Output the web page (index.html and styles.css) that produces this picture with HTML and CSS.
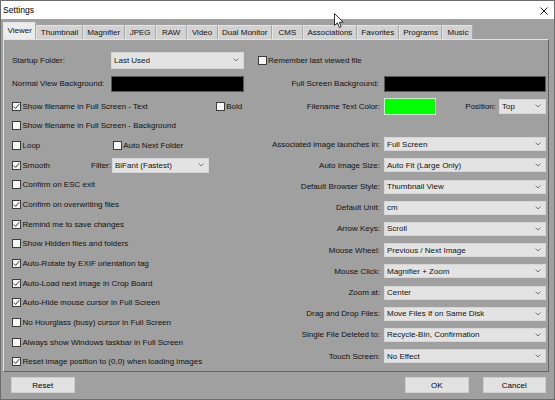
FILE: index.html
```html
<!DOCTYPE html>
<html lang="en">
<head>
    <meta charset="UTF-8">
    <title>Settings</title>
    <link rel="stylesheet" href="styles.css">
</head>
<body>
  <div class="window">
    <div class="titlebar">
        <span>Settings</span>
        <svg class="close" width="8" height="8" viewBox="0 0 8 8"><path d="M0.5 0.5 L7.5 7.5 M7.5 0.5 L0.5 7.5" stroke="#222" stroke-width="1" fill="none"/></svg>
    </div>
    <div class="tabs">
        <div class="tab active">Viewer</div>
        <div class="tab">Thumbnail</div>
        <div class="tab">Magnifier</div>
        <div class="tab">JPEG</div>
        <div class="tab">RAW</div>
        <div class="tab">Video</div>
        <div class="tab">Dual Monitor</div>
        <div class="tab">CMS</div>
        <div class="tab">Associations</div>
        <div class="tab">Favorites</div>
        <div class="tab">Programs</div>
        <div class="tab">Music</div>
    </div>

    <div class="panel">
        <!-- top rows span both halves -->
        <div class="top_row first">
            <span class="top_label">Startup Folder:</span>
            <div class="select tall w_start"><span>Last Used</span><svg width="6" height="4" viewBox="0 0 6 4"><path d="M0.5 0.5 L3 3 L5.5 0.5" stroke="#777" fill="none"/></svg></div>
            <div class="check remember"><span class="box"></span>Remember last viewed file</div>
        </div>
        <div class="top_row second">
            <span class="top_label">Normal View Background:</span>
            <div class="swatch black w_start"></div>
            <span class="right_label">Full Screen Background:</span>
            <div class="swatch black w_right"></div>
        </div>

        <div class="body">
            <div class="left_col">
                <div class="row">
                    <div class="check w_text"><span class="box on"><svg width="7" height="7" viewBox="0 0 7 7"><path d="M0.8 3.6 L2.6 5.4 L6.2 1.2" stroke="#333" fill="none"/></svg></span>Show filename in Full Screen - Text</div>
                    <div class="check"><span class="box"></span>Bold</div>
                </div>
                <div class="row"><div class="check"><span class="box"></span>Show filename in Full Screen - Background</div></div>
                <div class="row">
                    <div class="check w_loop"><span class="box"></span>Loop</div>
                    <div class="check"><span class="box"></span>Auto Next Folder</div>
                </div>
                <div class="row">
                    <div class="check w_smooth"><span class="box on"><svg width="7" height="7" viewBox="0 0 7 7"><path d="M0.8 3.6 L2.6 5.4 L6.2 1.2" stroke="#333" fill="none"/></svg></span>Smooth</div>
                    <span class="filter_label">Filter:</span>
                    <div class="select mid w_filter"><span>BiFant (Fastest)</span><svg width="6" height="4" viewBox="0 0 6 4"><path d="M0.5 0.5 L3 3 L5.5 0.5" stroke="#777" fill="none"/></svg></div>
                </div>
                <div class="row"><div class="check"><span class="box"></span>Confirm on ESC exit</div></div>
                <div class="row"><div class="check"><span class="box on"><svg width="7" height="7" viewBox="0 0 7 7"><path d="M0.8 3.6 L2.6 5.4 L6.2 1.2" stroke="#333" fill="none"/></svg></span>Confirm on overwriting files</div></div>
                <div class="row"><div class="check"><span class="box on"><svg width="7" height="7" viewBox="0 0 7 7"><path d="M0.8 3.6 L2.6 5.4 L6.2 1.2" stroke="#333" fill="none"/></svg></span>Remind me to save changes</div></div>
                <div class="row"><div class="check"><span class="box"></span>Show Hidden files and folders</div></div>
                <div class="row"><div class="check"><span class="box on"><svg width="7" height="7" viewBox="0 0 7 7"><path d="M0.8 3.6 L2.6 5.4 L6.2 1.2" stroke="#333" fill="none"/></svg></span>Auto-Rotate by EXIF orientation tag</div></div>
                <div class="row"><div class="check"><span class="box on"><svg width="7" height="7" viewBox="0 0 7 7"><path d="M0.8 3.6 L2.6 5.4 L6.2 1.2" stroke="#333" fill="none"/></svg></span>Auto-Load next image in Crop Board</div></div>
                <div class="row"><div class="check"><span class="box on"><svg width="7" height="7" viewBox="0 0 7 7"><path d="M0.8 3.6 L2.6 5.4 L6.2 1.2" stroke="#333" fill="none"/></svg></span>Auto-Hide mouse cursor in Full Screen</div></div>
                <div class="row"><div class="check"><span class="box"></span>No Hourglass (busy) cursor in Full Screen</div></div>
                <div class="row"><div class="check"><span class="box"></span>Always show Windows taskbar in Full Screen</div></div>
                <div class="row"><div class="check"><span class="box on"><svg width="7" height="7" viewBox="0 0 7 7"><path d="M0.8 3.6 L2.6 5.4 L6.2 1.2" stroke="#333" fill="none"/></svg></span>Reset image position to (0,0) when loading images</div></div>
            </div>

            <div class="right_col">
                <div class="color_row">
                    <span class="color_label">Filename Text Color:</span>
                    <div class="swatch green"></div>
                    <span class="pos_label">Position:</span>
                    <div class="select mid w_pos"><span>Top</span><svg width="6" height="4" viewBox="0 0 6 4"><path d="M0.5 0.5 L3 3 L5.5 0.5" stroke="#777" fill="none"/></svg></div>
                </div>
                <div class="opts">
                    <div class="opt"><span class="right_label">Associated image launches in:</span><div class="select w_right"><span>Full Screen</span><svg width="6" height="4" viewBox="0 0 6 4"><path d="M0.5 0.5 L3 3 L5.5 0.5" stroke="#777" fill="none"/></svg></div></div>
                    <div class="opt"><span class="right_label">Auto Image Size:</span><div class="select w_right"><span>Auto Fit (Large Only)</span><svg width="6" height="4" viewBox="0 0 6 4"><path d="M0.5 0.5 L3 3 L5.5 0.5" stroke="#777" fill="none"/></svg></div></div>
                    <div class="opt"><span class="right_label">Default Browser Style:</span><div class="select w_right"><span>Thumbnail View</span><svg width="6" height="4" viewBox="0 0 6 4"><path d="M0.5 0.5 L3 3 L5.5 0.5" stroke="#777" fill="none"/></svg></div></div>
                    <div class="opt"><span class="right_label">Default Unit:</span><div class="select w_right"><span>cm</span><svg width="6" height="4" viewBox="0 0 6 4"><path d="M0.5 0.5 L3 3 L5.5 0.5" stroke="#777" fill="none"/></svg></div></div>
                    <div class="opt"><span class="right_label">Arrow Keys:</span><div class="select w_right"><span>Scroll</span><svg width="6" height="4" viewBox="0 0 6 4"><path d="M0.5 0.5 L3 3 L5.5 0.5" stroke="#777" fill="none"/></svg></div></div>
                    <div class="opt"><span class="right_label">Mouse Wheel:</span><div class="select w_right"><span>Previous / Next Image</span><svg width="6" height="4" viewBox="0 0 6 4"><path d="M0.5 0.5 L3 3 L5.5 0.5" stroke="#777" fill="none"/></svg></div></div>
                    <div class="opt"><span class="right_label">Mouse Click:</span><div class="select w_right"><span>Magnifier + Zoom</span><svg width="6" height="4" viewBox="0 0 6 4"><path d="M0.5 0.5 L3 3 L5.5 0.5" stroke="#777" fill="none"/></svg></div></div>
                    <div class="opt"><span class="right_label">Zoom at:</span><div class="select w_right"><span>Center</span><svg width="6" height="4" viewBox="0 0 6 4"><path d="M0.5 0.5 L3 3 L5.5 0.5" stroke="#777" fill="none"/></svg></div></div>
                    <div class="opt"><span class="right_label">Drag and Drop Files:</span><div class="select w_right"><span>Move Files If on Same Disk</span><svg width="6" height="4" viewBox="0 0 6 4"><path d="M0.5 0.5 L3 3 L5.5 0.5" stroke="#777" fill="none"/></svg></div></div>
                    <div class="opt"><span class="right_label">Single File Deleted to:</span><div class="select w_right"><span>Recycle-Bin, Confirmation</span><svg width="6" height="4" viewBox="0 0 6 4"><path d="M0.5 0.5 L3 3 L5.5 0.5" stroke="#777" fill="none"/></svg></div></div>
                    <div class="opt"><span class="right_label">Touch Screen:</span><div class="select w_right"><span>No Effect</span><svg width="6" height="4" viewBox="0 0 6 4"><path d="M0.5 0.5 L3 3 L5.5 0.5" stroke="#777" fill="none"/></svg></div></div>
                </div>
            </div>
        </div>
    </div>

    <div class="footer">
        <div class="btn">Reset</div>
        <div class="btn ok">OK</div>
        <div class="btn cancel">Cancel</div>
    </div>

    <!-- mouse pointer over the title bar -->
    <svg class="cursor" width="11" height="16" viewBox="0 0 11 16"><path d="M0.5 0.5 L0.5 12.5 L3.4 9.8 L5.4 14.5 L7.2 13.7 L5.3 9.2 L9.2 9.2 Z" fill="#fff" stroke="#333" stroke-width="1"/></svg>
  </div>
</body>
</html>
```

FILE: styles.css
```css
*{
  margin:0;
  padding:0;
  box-sizing: border-box;
}
body{
  width: 555px;
  height: 400px;
  overflow: hidden;
  background: #a0a0a0;
  font-family: "Liberation Sans", Arial, sans-serif;
  font-size: 8px;
  color: #111;
}
.window{
  position: relative;
  width: 555px;
  height: 400px;
  border: 1px solid #6c6c6c;
}
.titlebar{
  height: 18px;
  background: #fff;
  display: flex;
  align-items: center;
  justify-content: space-between;
  padding: 0 6px 0 2px;
  font-size: 8.6px;
  color: #000;
}
.close{
  margin-top: 1px;
}
.tabs{
  height: 20px;
  display: flex;
  flex-flow: row nowrap;
  align-items: flex-end;
  padding: 3px 0 0 2px;
}
.tab{
  height: 14px;
  min-width: 31px;
  padding: 0 3.5px;
  display: flex;
  align-items: center;
  justify-content: center;
  background: #d2d2d2;
  border: 1px solid #a8a8a8;
  border-top-color: #e4e4e4;
  border-left-color: #e4e4e4;
  border-bottom: none;
  white-space: nowrap;
}
.tab.active{
  height: 17px;
  background: #ececec;
  padding-bottom: 1px;
}
.panel{
  margin-left: 2px;
  width: 546px;
  height: 333px;
  border: 1px solid;
  border-color: #e2e2e2 #626262 #626262 #e2e2e2;
  padding: 0 2px 0 8px;
}
.top_row{
  display: flex;
  flex-flow: row nowrap;
  align-items: center;
}
.top_row.first{
  height: 17px;
  margin-top: 11.5px;
}
.top_row.second{
  height: 16px;
  margin-top: 7px;
}
.top_label{
  width: 99px;
}
.w_start{
  width: 133px;
}
.w_right{
  width: 162px;
}
.remember{
  margin-left: 13.5px;
}
.select{
  height: 14px;
  background: #e3e3e3;
  border: 1px solid #d6d6d6;
  display: flex;
  align-items: center;
  justify-content: space-between;
  padding: 0 4px 0 2px;
  white-space: nowrap;
}
.select.tall{
  height: 17px;
}
.select.mid{
  height: 15px;
}
.swatch{
  height: 16px;
  border: 1px solid #5a5a5a;
}
.black{
  background: #000;
}
.green{
  width: 52px;
  height: 17px;
  background: #00ff00;
  border-color: #c8f0c8;
}
.right_label{
  flex: 1;
  text-align: right;
  padding-right: 5px;
  white-space: nowrap;
}
.body{
  display: flex;
  flex-flow: row nowrap;
  margin-top: 5px;
}
.left_col{
  width: 250px;
}
.right_col{
  flex: 1;
}
.row{
  height: 19.67px;
  display: flex;
  align-items: center;
}
.check{
  display: flex;
  align-items: center;
  white-space: nowrap;
}
.box{
  width: 9px;
  height: 9px;
  margin-right: 1.5px;
  background: #f6f6f6;
  border: 1px solid #3c3c3c;
  display: flex;
  align-items: center;
  justify-content: center;
  flex-shrink: 0;
}
.w_text{
  width: 203.7px;
}
.w_loop{
  width: 100.7px;
}
.w_smooth{
  width: 79px;
}
.filter_label{
  width: 21px;
}
.w_filter{
  width: 97px;
}
.color_row{
  height: 17px;
  margin-top: 1px;
  display: flex;
  align-items: center;
}
.color_label{
  width: 122px;
  flex-shrink: 0;
  text-align: right;
  padding-right: 4px;
  white-space: nowrap;
}
.pos_label{
  margin-left: auto;
  margin-right: 3px;
}
.w_pos{
  width: 47px;
}
.opts{
  margin-top: 22.7px;
}
.opt{
  height: 14px;
  margin-top: 7.2px;
  display: flex;
  align-items: center;
}
.opt .right_label{
  padding-right: 4px;
}
.footer{
  display: flex;
  flex-flow: row nowrap;
  margin-top: 5.3px;
  padding: 0 8px 0 10px;
}
.btn{
  width: 63.5px;
  height: 16px;
  background: #e1e1e1;
  border: 1px solid #cfcfcf;
  display: flex;
  align-items: center;
  justify-content: center;
  color: #000;
}
.btn.ok{
  margin-left: auto;
}
.btn.cancel{
  margin-left: 14px;
}
.cursor{
  position: absolute;
  left: 333px;
  top: 12px;
}
```
